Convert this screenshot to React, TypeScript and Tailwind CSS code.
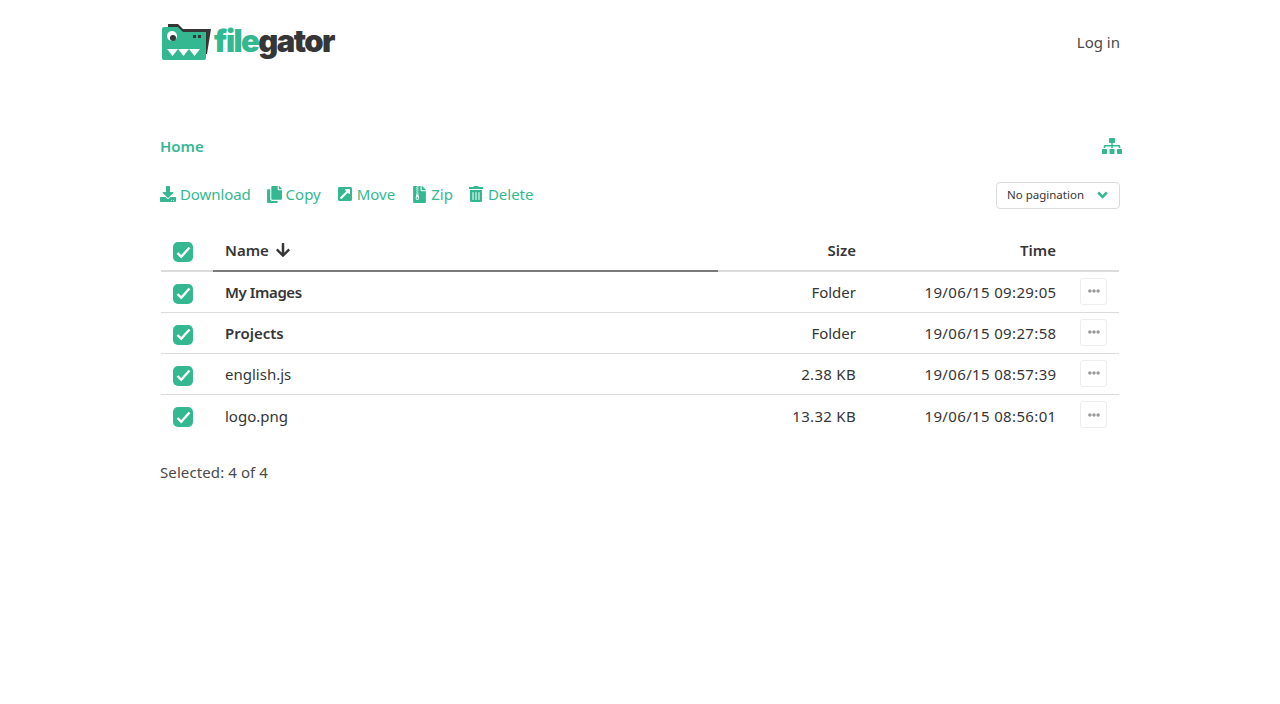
import { FaArrowDown, FaCopy, FaDownload, FaEllipsisH, FaExternalLinkSquareAlt, FaFileArchive, FaSitemap, FaTrashAlt } from "react-icons/fa";

const actions = [
  { label: "Download", icon: FaDownload, cls: "gap-[4px] tracking-[-0.1px]", iconCls: "h-4 w-4" },
  { label: "Copy", icon: FaCopy, cls: "gap-[4px]", iconCls: "h-[17px] w-[15px]" },
  { label: "Move", icon: FaExternalLinkSquareAlt, cls: "ml-[1px] gap-[5px]", iconCls: "h-4 w-[14px]" },
  { label: "Zip", icon: FaFileArchive, cls: "ml-[2px] gap-[5px]", iconCls: "h-[17px] w-[13px]" },
  { label: "Delete", icon: FaTrashAlt, cls: "gap-[5px]", iconCls: "h-4 w-[14px]" },
];

const rows = [
  { name: "My Images", size: "Folder", time: "19/06/15 09:29:05", nameCls: "font-semibold tracking-[-0.4px]", sizeCls: "" },
  { name: "Projects", size: "Folder", time: "19/06/15 09:27:58", nameCls: "font-semibold", sizeCls: "" },
  { name: "english.js", size: "2.38 KB", time: "19/06/15 08:57:39", nameCls: "", sizeCls: "tracking-[0.3px]" },
  { name: "logo.png", size: "13.32 KB", time: "19/06/15 08:56:01", nameCls: "", sizeCls: "tracking-[0.3px]" },
];

function Check() {
  return (
    <span className="flex h-5 w-5 items-center justify-center rounded-[5px] bg-[#34b891]">
      <svg width="15" height="13" viewBox="0 0 15 13" fill="none">
        <path d="M1.5 7 5.2 10.7 13.5 1.5" stroke="#fff" strokeWidth="2.4" />
      </svg>
    </span>
  );
}

function Logo() {
  return (
    <div className="ml-[2px] flex items-start">
      <svg width="52" height="38" viewBox="0 0 52 38" className="shrink-0">
        <path d="M6 0h10l5 5h28l-4 25h-8V8H6z" fill="#363636" />
        <path d="M2 3h14l5 5h23v26a2 2 0 0 1-2 2H2a2 2 0 0 1-2-2V5a2 2 0 0 1 2-2z" fill="#34b891" />
        <circle cx="10" cy="12" r="5" fill="#fff" />
        <circle cx="11" cy="14" r="3" fill="#363636" />
        <rect x="31" y="11" width="3" height="3" fill="#363636" />
        <rect x="36" y="11" width="3" height="3" fill="#363636" />
        <path d="M5 25l5.5 7 5.5-7 5.5 7 5.5-7 5.5 7 5.5-7z" fill="#fff" />
      </svg>
      <span className="mt-[-2px] font-['Inter',sans-serif] text-[31px] leading-[38px] font-black tracking-[-1.6px]">
        <span className="text-[#34b891]">file</span>
        <span className="text-[#363636]">gator</span>
      </span>
    </div>
  );
}

export default function App() {
  return (
    <div className="mx-auto min-h-[704px] w-[960px] bg-white font-['Noto_Sans',sans-serif] text-[15px] text-[#4a4a4a]">
      <header className="flex h-[86px] items-center justify-between">
        <Logo />
        <span className="mb-[2px]">Log in</span>
      </header>

      <div className="mt-[48px] flex h-6 items-center justify-between">
        <span className="font-semibold text-[#34b891]">Home</span>
        <FaSitemap className="relative left-[2px] h-[20px] w-[20px] text-[#34b891]" />
      </div>

      <div className="mt-[22px] flex h-7 items-center justify-between">
        <div className="flex gap-4 text-[#34b891]">
          {actions.map((a) => (
            <span key={a.label} className={`flex items-center ${a.cls}`}>
              <a.icon className={a.iconCls} />
              {a.label}
            </span>
          ))}
        </div>
        <div className="mt-[2px] flex h-[27px] w-[124px] items-center justify-between rounded-[4px] border border-[#dbdbdb] pr-[11px] pl-[10px] text-[11.5px] text-[#363636]">
          No pagination
          <svg width="11" height="8" viewBox="0 0 11 8" fill="none">
            <path d="M1.2 1.5 5.5 5.8 9.8 1.5" stroke="#34b891" strokeWidth="2.6" />
          </svg>
        </div>
      </div>

      <div className="mt-[24px] px-px text-[#363636]">
        <div className="flex h-[40px] border-b-2 border-[#dbdbdb] font-semibold">
          <div className="flex w-[52px] items-center justify-center pt-[2px] pr-[8px]">
            <Check />
          </div>
          <div className="mb-[-2px] flex w-[505px] items-center gap-[6px] border-b-2 border-[#7a7a7a] pb-[2px] pl-3">
            Name <FaArrowDown className="h-4 w-4" />
          </div>
          <div className="flex w-[150px] items-center justify-end pr-3 pb-[2px]">Size</div>
          <div className="flex w-[200px] items-center justify-end pr-3 pb-[2px]">Time</div>
          <div className="w-[51px]" />
        </div>
        {rows.map((r, i) => (
          <div key={r.name} className={`flex h-[41px] ${i < 3 ? "border-b border-[#dbdbdb]" : ""}`}>
            <div className="flex w-[52px] items-center justify-center pt-[3px] pr-[8px]">
              <Check />
            </div>
            <div className={`flex w-[505px] items-center pt-[1px] pl-3 ${r.nameCls}`}>{r.name}</div>
            <div className={`flex w-[150px] items-center justify-end pt-[1px] pr-3 ${r.sizeCls}`}>{r.size}</div>
            <div className="flex w-[200px] items-center justify-end pt-[1px] pr-[11.5px] tracking-[0.35px]">{r.time}</div>
            <div className="flex w-[51px] items-center justify-center pb-[2px]">
              <span className="flex h-[27px] w-[27px] items-center justify-center rounded-[3px] border border-[#ededed] text-[#9a9a9a]">
                <FaEllipsisH className="h-3 w-3" />
              </span>
            </div>
          </div>
        ))}
      </div>

      <p className="mt-[24px] leading-6 tracking-[0.1px]">Selected: 4 of 4</p>
    </div>
  );
}
